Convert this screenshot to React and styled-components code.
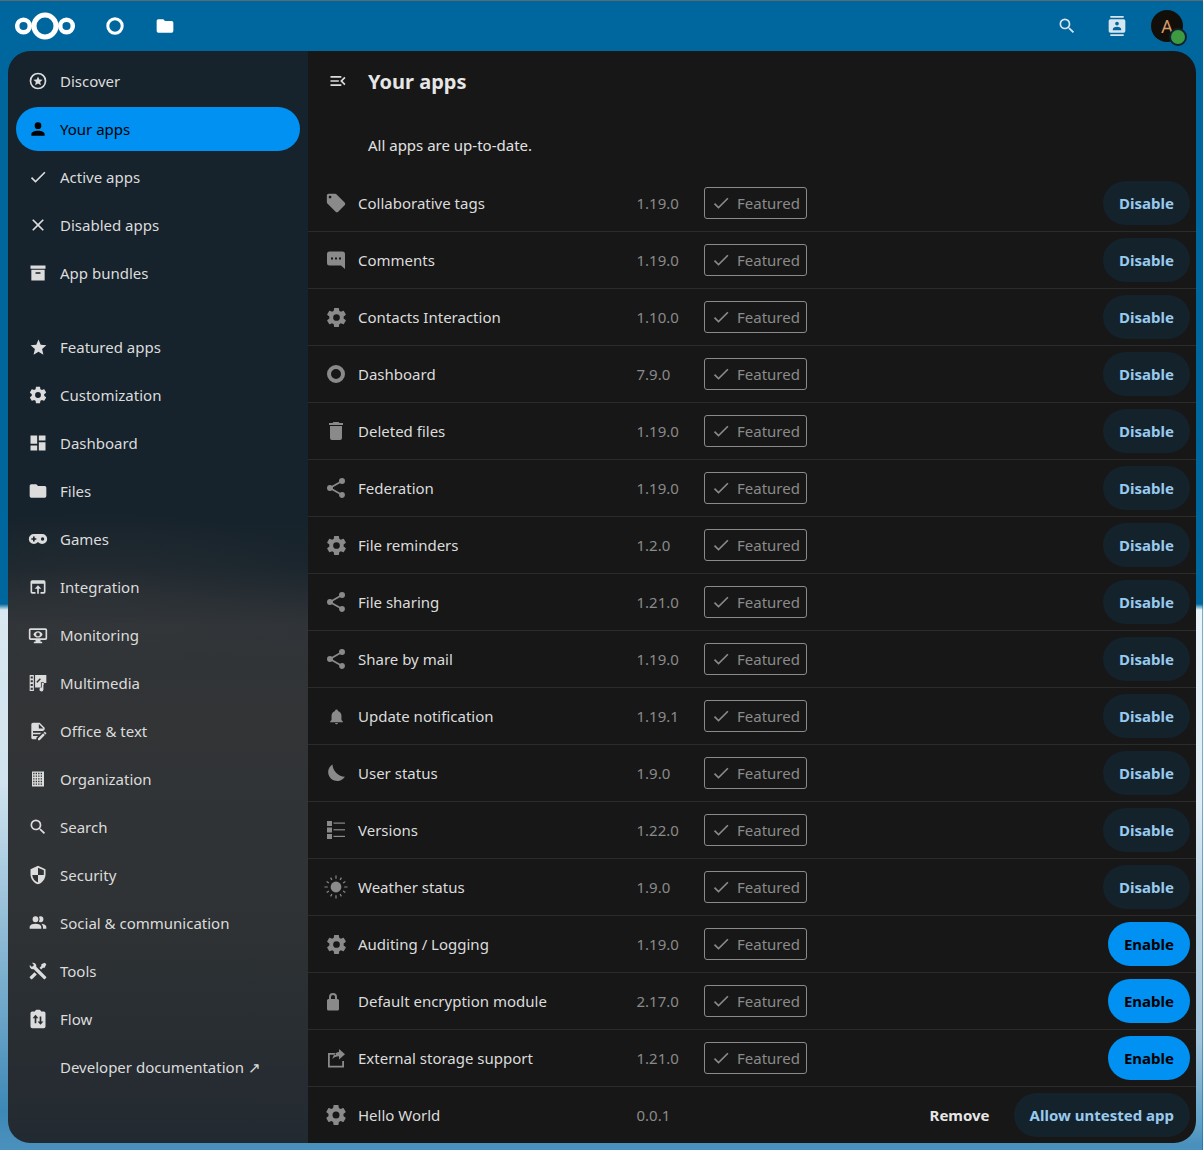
import React from "react";
import styled, { createGlobalStyle } from "styled-components";

const GlobalStyle = createGlobalStyle`
  html, body {
    margin: 0;
    padding: 0;
    background: #00679e;
    font-family: "Noto Sans", sans-serif;
    font-size: 15px;
  }
`;

const p = (d) => <path fillRule="evenodd" d={d} />;

const windows = [];
for (let row = 0; row < 5; row++) {
  for (let col = 0; col < 4; col++) {
    windows.push(`M${6.2 + col * 3} ${4.6 + row * 3.2}h1.6v1.6h-1.6z`);
  }
}

const rays = [0, 30, 60, 90, 120, 150, 180, 210, 240, 270, 300, 330].map((deg) => {
  const r = (deg * Math.PI) / 180;
  const len = deg % 90 === 0 ? 11.5 : 10.8;
  return `M${12 + Math.cos(r) * 8.2} ${12 + Math.sin(r) * 8.2}L${12 + Math.cos(r) * len} ${12 + Math.sin(r) * len}`;
});

const gear =
  "M12,15.5A3.5,3.5 0 0,1 8.5,12A3.5,3.5 0 0,1 12,8.5A3.5,3.5 0 0,1 15.5,12A3.5,3.5 0 0,1 12,15.5M19.43,12.97C19.47,12.65 19.5,12.33 19.5,12C19.5,11.67 19.47,11.34 19.43,11L21.54,9.37C21.73,9.22 21.78,8.95 21.66,8.73L19.66,5.27C19.54,5.05 19.27,4.96 19.05,5.05L16.56,6.05C16.04,5.66 15.5,5.32 14.87,5.07L14.5,2.42C14.46,2.18 14.25,2 14,2H10C9.75,2 9.54,2.18 9.5,2.42L9.13,5.07C8.5,5.32 7.96,5.66 7.44,6.05L4.95,5.05C4.73,4.96 4.46,5.05 4.34,5.27L2.34,8.73C2.21,8.95 2.27,9.22 2.46,9.37L4.57,11C4.53,11.34 4.5,11.67 4.5,12C4.5,12.33 4.53,12.65 4.57,12.97L2.46,14.63C2.27,14.78 2.21,15.05 2.34,15.27L4.34,18.73C4.46,18.95 4.73,19.03 4.95,18.95L7.44,17.94C7.96,18.34 8.5,18.68 9.13,18.93L9.5,21.58C9.54,21.82 9.75,22 10,22H14C14.25,22 14.46,21.82 14.5,21.58L14.87,18.93C15.5,18.67 16.04,18.34 16.56,17.94L19.05,18.95C19.27,19.03 19.54,18.95 19.66,18.73L21.66,15.27C21.78,15.05 21.73,14.78 21.54,14.63L19.43,12.97Z";

const share =
  "M18,16.08C17.24,16.08 16.56,16.38 16.04,16.85L8.91,12.7C8.96,12.47 9,12.24 9,12C9,11.76 8.96,11.53 8.91,11.3L15.96,7.19C16.5,7.69 17.21,8 18,8A3,3 0 0,0 21,5A3,3 0 0,0 18,2A3,3 0 0,0 15,5C15,5.24 15.04,5.47 15.09,5.7L8.04,9.81C7.5,9.31 6.79,9 6,9A3,3 0 0,0 3,12A3,3 0 0,0 6,15C6.79,15 7.5,14.69 8.04,14.19L15.16,18.34C15.11,18.55 15.08,18.77 15.08,19C15.08,20.61 16.39,21.91 18,21.91C19.61,21.91 20.92,20.61 20.92,19A2.92,2.92 0 0,0 18,16.08Z";

const icons = {
  discover: p("M12,2A10,10 0 0,0 2,12A10,10 0 0,0 12,22A10,10 0 0,0 22,12A10,10 0 0,0 12,2M12,4A8,8 0 0,1 20,12A8,8 0 0,1 12,20A8,8 0 0,1 4,12A8,8 0 0,1 12,4M12,6.5L10.4,10.2L6.4,10.55L9.4,13.2L8.5,17.1L12,15L15.5,17.1L14.6,13.2L17.6,10.55L13.6,10.2Z"),
  account: p("M12,4A4,4 0 0,1 16,8A4,4 0 0,1 12,12A4,4 0 0,1 8,8A4,4 0 0,1 12,4M12,14C16.42,14 20,15.79 20,18V20H4V18C4,15.79 7.58,14 12,14Z"),
  check: p("M21,7L9,19L3.5,13.5L4.91,12.09L9,16.17L19.59,5.59L21,7Z"),
  close: p("M19,6.41L17.59,5L12,10.59L6.41,5L5,6.41L10.59,12L5,17.59L6.41,19L12,13.41L17.59,19L19,17.59L13.41,12L19,6.41Z"),
  archive: p("M3,3H21V7H3V3M4,8H20V21H4V8M9.5,11A0.5,0.5 0 0,0 9,11.5V13H15V11.5A0.5,0.5 0 0,0 14.5,11H9.5Z"),
  star: p("M12,17.27L18.18,21L16.54,13.97L22,9.24L14.81,8.62L12,2L9.19,8.62L2,9.24L7.45,13.97L5.82,21L12,17.27Z"),
  gear: p(gear),
  dashboard: p("M13,3V9H21V3M13,21H21V11H13M3,21H11V15H3M3,13H11V3H3V13Z"),
  folder: p("M10,4H4C2.89,4 2,4.89 2,6V18A2,2 0 0,0 4,20H20A2,2 0 0,0 22,18V8C22,6.89 21.1,6 20,6H12L10,4Z"),
  games: p("M7,6H17A6,6 0 0,1 23,12A6,6 0 0,1 17,18C15.22,18 13.63,17.23 12.53,16H11.47C10.37,17.23 8.78,18 7,18A6,6 0 0,1 1,12A6,6 0 0,1 7,6M6,9V11H4V13H6V15H8V13H10V11H8V9H6M17.5,10A2,2 0 0,0 15.5,12A2,2 0 0,0 17.5,14A2,2 0 0,0 19.5,12A2,2 0 0,0 17.5,10Z"),
  integration: p("M12,10L8,14H11V20H13V14H16M19,4H5C3.89,4 3,4.9 3,6V18A2,2 0 0,0 5,20H9V18H5V8H19V18H15V20H19A2,2 0 0,0 21,18V6A2,2 0 0,0 19,4Z"),
  monitor: p("M3,4C1.89,4 1,4.89 1,6V16A2,2 0 0,0 3,18H9V20H7V22H17V20H15V18H21A2,2 0 0,0 23,16V6C23,4.89 22.11,4 21,4H3M3,6H21V16H3V6M12,7.5C9.5,7.5 7.36,9.06 6.5,11.25C7.36,13.44 9.5,15 12,15C14.5,15 16.64,13.44 17.5,11.25C16.64,9.06 14.5,7.5 12,7.5M12,9A2.25,2.25 0 0,1 14.25,11.25A2.25,2.25 0 0,1 12,13.5A2.25,2.25 0 0,1 9.75,11.25A2.25,2.25 0 0,1 12,9Z"),
  multimedia: p("M2 2.5h5v19H2zM3.2 4.3v2.4h2.6V4.3zM3.2 8.8v2.4h2.6V8.8zM3.2 13.2v2.4h2.6v-2.4zM3.2 17.6V20h2.6v-2.4zM8.5 2.5H22V14h-3v-3H15.5v6.5H8.5zM11 12l4.5-4.5-1.2-1.2-4.3 4.3zM16.5 12H22v2.2h-3.5v5.6a2.4 2.4 0 1 1-2-2.3z"),
  office: p("M6,2C4.89,2 4,2.89 4,4V20A2,2 0 0,0 6,22H10V20.09L12.09,18H6V16H14.09L16.09,14H6V12H18.09L20,10.09V8L14,2H6M13,3.5L18.5,9H13V3.5M20.15,13C20,13 19.86,13.05 19.75,13.16L18.73,14.18L20.82,16.26L21.84,15.25C22.05,15.03 22.05,14.67 21.84,14.46L20.54,13.16C20.43,13.05 20.29,13 20.15,13M18.14,14.77L12,20.92V23H14.08L20.23,16.85L18.14,14.77Z"),
  organization: p(`M4.8 3h14.4v18H4.8z${windows.join("")}`),
  search: p("M9.5,3A6.5,6.5 0 0,1 16,9.5C16,11.11 15.41,12.59 14.44,13.73L14.71,14H15.5L20.5,19L19,20.5L14,15.5V14.71L13.73,14.44C12.59,15.41 11.11,16 9.5,16A6.5,6.5 0 0,1 3,9.5A6.5,6.5 0 0,1 9.5,3M9.5,5C7,5 5,7 5,9.5C5,12 7,14 9.5,14C12,14 14,12 14,9.5C14,7 12,5 9.5,5Z"),
  security: p("M12,1L3,5V11C3,16.55 6.84,21.73 12,23C17.16,21.73 21,16.55 21,11V5L12,1M12,12V3.19L19,6.3V11C19,11.34 18.97,11.67 18.93,12H12M12,12V20.92C8.3,19.78 5.55,16.11 5.07,12H12Z"),
  people: p("M16 17V19H2V17S2 13 9 13 16 17 16 17M12.5 7.5A3.5 3.5 0 1 0 9 11A3.5 3.5 0 0 0 12.5 7.5M15.94 13A5.32 5.32 0 0 1 18 17V19H22V17S22 13.37 15.94 13M15 4A3.39 3.39 0 0 0 13.07 4.59A5 5 0 0 1 13.07 10.41A3.39 3.39 0 0 0 15 11A3.5 3.5 0 0 0 15 4Z"),
  tools: p("M21.71 20.29L20.29 21.71A1 1 0 0 1 18.88 21.71L7 9.85A3.81 3.81 0 0 1 6 10A4 4 0 0 1 2.22 4.7L4.76 7.24L5.29 6.71L6.71 5.29L7.24 4.76L4.7 2.22A4 4 0 0 1 10 6A3.81 3.81 0 0 1 9.85 7L21.71 18.88A1 1 0 0 1 21.71 20.29M2.29 18.88A1 1 0 0 0 2.29 20.29L3.71 21.71A1 1 0 0 0 5.12 21.71L10.59 16.25L7.76 13.42M20 2L16 4V6L13.83 8.17L15.83 10.17L18 8H20L22 4Z"),
  flow: p("M19,3H15.82C15.4,1.84 14.3,1 13,1H11C9.7,1 8.6,1.84 8.18,3H5A2,2 0 0,0 3,5V21A2,2 0 0,0 5,23H19A2,2 0 0,0 21,21V5A2,2 0 0,0 19,3M9,7L5.5,11H8V17H10V11H12.5ZM15,19L18.5,15H16V9H14V15H11.5Z"),
  tag: p("M5.5,7A1.5,1.5 0 0,1 4,5.5A1.5,1.5 0 0,1 5.5,4A1.5,1.5 0 0,1 7,5.5A1.5,1.5 0 0,1 5.5,7M21.41,11.58L12.41,2.58C12.05,2.22 11.55,2 11,2H4C2.89,2 2,2.89 2,4V11C2,11.55 2.22,12.05 2.59,12.41L11.58,21.41C11.95,21.77 12.45,22 13,22C13.55,22 14.05,21.77 14.41,21.41L21.41,14.41C21.78,14.05 22,13.55 22,13C22,12.44 21.77,11.94 21.41,11.58Z"),
  comment: p("M5.5 3.5h13A2.5 2.5 0 0 1 21 6V21l-4-3.5H5.5A2.5 2.5 0 0 1 3 15V6A2.5 2.5 0 0 1 5.5 3.5zM7 9.5v2h2v-2zM11 9.5v2h2v-2zM15 9.5v2h2v-2z"),
  ring: <circle cx="12" cy="12" r="7" fill="none" stroke="currentColor" strokeWidth="4" />,
  topRing: <circle cx="12" cy="12" r="7.2" fill="none" stroke="currentColor" strokeWidth="3" />,
  trash: p("M19,4H15.5L14.5,3H9.5L8.5,4H5V6H19M6,19A2,2 0 0,0 8,21H16A2,2 0 0,0 18,19V7H6V19Z"),
  share: p(share),
  bell: p("M21,19V20H3V19L5,17V11C5,7.9 7.03,5.17 10,4.29C10,4.19 10,4.1 10,4A2,2 0 0,1 12,2A2,2 0 0,1 14,4C14,4.1 14,4.19 14,4.29C16.97,5.17 19,7.9 19,11V17L21,19M14,21A2,2 0 0,1 12,23A2,2 0 0,1 10,21"),
  moon: p("M8.5 3.4A9 9 0 1 0 20.9 15.7A13 13 0 0 1 8.5 3.4Z"),
  list: (
    <>
      <rect x="3" y="3" width="5" height="5" />
      <rect x="3" y="9.5" width="5" height="5" />
      <rect x="3" y="16" width="5" height="5" />
      <rect x="9.5" y="4.5" width="11.5" height="1.2" />
      <rect x="9.5" y="11.2" width="11.5" height="1.2" />
      <rect x="9.5" y="17.8" width="11.5" height="1.2" />
    </>
  ),
  sun: (
    <>
      <circle cx="12" cy="12" r="5.4" />
      <path d={rays.join("")} stroke="currentColor" strokeWidth="1.2" fill="none" />
    </>
  ),
  lock: p("M3 20V11.5A1.5 1.5 0 0 1 4.5 10H5V8a4 4 0 0 1 8 0v2h.5A1.5 1.5 0 0 1 15 11.5V20A1.5 1.5 0 0 1 13.5 21.5H4.5A1.5 1.5 0 0 1 3 20zM7 10h4V8a2 2 0 0 0-4 0z"),
  external: p("M4 7h8v1.8H5.8v11h12.4V15H20v6.6H4zM15 3l6 5.2-6 5.2v-3.2c-3 0-5 .8-6.5 3 .5-4.2 2.8-6.8 6.5-7.3z"),
  menuOpen: p("M21,15.61L19.59,17L14.58,12L19.59,7L21,8.39L17.44,12L21,15.61M3,6H16V8H3V6M3,13V11H13V13H3M3,18V16H16V18H3Z"),
  contacts: p("M20,0H4V2H20V0M4,24H20V22H4V24M20,4H4A2,2 0 0,0 2,6V18A2,2 0 0,0 4,20H20A2,2 0 0,0 22,18V6A2,2 0 0,0 20,4M12,6.75A2.25,2.25 0 0,1 14.25,9A2.25,2.25 0 0,1 12,11.25A2.25,2.25 0 0,1 9.75,9A2.25,2.25 0 0,1 12,6.75M17,17H7V15.5C7,13.83 10.33,13 12,13C13.67,13 17,13.83 17,15.5V17Z"),
};

const Glyph = styled.svg`
  width: ${(props) => props.$size || 20}px;
  height: ${(props) => props.$size || 20}px;
  fill: currentColor;
  flex: none;
  display: block;
`;

function Icon({ name, size }) {
  return (
    <Glyph $size={size} viewBox="0 0 24 24" aria-hidden="true">
      {icons[name]}
    </Glyph>
  );
}

const Page = styled.div`
  box-sizing: border-box;
  width: 100%;
  height: 1150px;
  overflow: hidden;
  border-top: 1px solid #5d6a72;
  display: flex;
  flex-direction: column;
  background:
    linear-gradient(#00679e 0, #00679e 603px, #d9e8f1 609px, #d2e4ef 780px, #9cc3db 900px, #6ea6c9 1010px, #3d88b6 1110px, #4a90bd 1143px) left / 51% 100% no-repeat,
    linear-gradient(#00679e 0, #00679e 603px, #e9f3f8 609px, #dfecf4 800px, #bcd6e7 900px, #a0c4dc 1040px, #5c9fc6 1125px, #4a90bd 1143px) right / 51% 100% no-repeat;
`;

const TopBar = styled.header`
  height: 50px;
  flex: none;
  display: flex;
  align-items: center;
  padding: 0 20px 0 15px;
  color: #fff;
`;

const Logo = styled.svg`
  width: 61px;
  height: 30px;
  flex: none;
  display: block;
`;

const TopNav = styled.nav`
  display: flex;
  align-items: center;
  margin-left: 14px;
`;

const TopNavItem = styled.div`
  width: 50px;
  height: 50px;
  display: flex;
  align-items: center;
  justify-content: center;
`;

const TopActions = styled.div`
  margin-left: auto;
  display: flex;
  align-items: center;
  color: #d6e6f0;
`;

const Avatar = styled.div`
  position: relative;
  width: 32px;
  height: 32px;
  margin-left: 9px;
  border-radius: 50%;
  background: #120e0a;
  color: #d49b66;
  font-size: 18px;
  line-height: 32px;
  text-align: center;
`;

const StatusDot = styled.span`
  position: absolute;
  right: -4px;
  bottom: -4px;
  box-sizing: border-box;
  width: 18px;
  height: 18px;
  border-radius: 50%;
  background: #3d9a41;
  border: 2px solid #10222e;
`;

const Body = styled.div`
  flex: 1;
  min-height: 0;
  margin: 0 7px 7px 8px;
  border-radius: 22px;
  overflow: hidden;
  display: flex;
`;

const Sidebar = styled.aside`
  width: 300px;
  flex: none;
  box-sizing: border-box;
  padding: 8px 8px 0;
  background:
    radial-gradient(240px 80px at 90px 540px, rgba(60, 60, 60, 0.3), rgba(60, 60, 60, 0) 100%),
    linear-gradient(#17232c 0, #17232c 470px, #1a252d 515px, #303438 575px, #323436 660px, #2f3335 850px, #282d32 1000px, #222a31 1092px);
`;

const NavList = styled.ul`
  list-style: none;
  margin: 0;
  padding: 0;
`;

const NavItem = styled.li`
  height: 44px;
  margin-bottom: ${(props) => (props.$gapAfter ? 30 : 4)}px;
  display: flex;
  align-items: center;
  border-radius: 22px;
  background: ${(props) => (props.$active ? "#0091f2" : "transparent")};
  color: ${(props) => (props.$active ? "#000" : "#dcdcdc")};
`;

const NavIconBox = styled.span`
  width: 44px;
  height: 44px;
  flex: none;
  display: flex;
  align-items: center;
  justify-content: center;
`;

const Main = styled.main`
  flex: 1;
  min-width: 0;
  background: #171717;
  color: #dcdcdc;
`;

const MainHeader = styled.div`
  height: 62px;
  box-sizing: border-box;
  padding: 0 0 2px 20px;
  display: flex;
  align-items: center;
`;

const Title = styled.h2`
  margin: 0 0 0 20px;
  font-size: 20px;
  font-weight: 700;
  color: #e6e6e6;
`;

const UpToDate = styled.p`
  height: 62px;
  margin: 0;
  padding: 2px 0 0 60px;
  box-sizing: border-box;
  display: flex;
  align-items: center;
  color: #e2e2e2;
`;

const AppRow = styled.div`
  height: ${(props) => (props.$last ? 56 : 57)}px;
  box-sizing: border-box;
  padding: 0 6px 0 16px;
  display: flex;
  align-items: center;
  border-bottom: ${(props) => (props.$last ? "none" : "1px solid #2b2b2b")};
`;

const AppIconBox = styled.span`
  width: 24px;
  height: 24px;
  flex: none;
  display: flex;
  align-items: center;
  justify-content: center;
  color: #8a8a8a;
`;

const AppName = styled.span`
  width: 278.5px;
  flex: none;
  margin-left: 10px;
`;

const Version = styled.span`
  width: 67.5px;
  flex: none;
  color: #8a8a8a;
`;

const Badge = styled.span`
  box-sizing: border-box;
  height: 32px;
  display: flex;
  align-items: center;
  gap: 6px;
  padding: 0 6px;
  border: 1px solid #8a8a8a;
  border-radius: 3px;
  color: #8a8a8a;
`;

const Actions = styled.div`
  margin-left: auto;
  display: flex;
  align-items: center;
  gap: 8px;
`;

const Button = styled.button`
  height: 44px;
  padding: 0 16px;
  border: none;
  border-radius: 22px;
  font-family: inherit;
  font-size: 15px;
  font-weight: 700;
  background: ${(props) =>
    props.$kind === "primary" ? "#0091f2" : props.$kind === "plain" ? "transparent" : "#14222c"};
  color: ${(props) =>
    props.$kind === "primary" ? "#000" : props.$kind === "plain" ? "#e6e6e6" : "#98caee"};
`;

const navItems = [
  { icon: "discover", label: "Discover" },
  { icon: "account", label: "Your apps", active: true },
  { icon: "check", label: "Active apps" },
  { icon: "close", label: "Disabled apps" },
  { icon: "archive", label: "App bundles", gapAfter: true },
  { icon: "star", label: "Featured apps", size: 19 },
  { icon: "gear", label: "Customization" },
  { icon: "dashboard", label: "Dashboard" },
  { icon: "folder", label: "Files" },
  { icon: "games", label: "Games" },
  { icon: "integration", label: "Integration" },
  { icon: "monitor", label: "Monitoring" },
  { icon: "multimedia", label: "Multimedia" },
  { icon: "office", label: "Office & text" },
  { icon: "organization", label: "Organization" },
  { icon: "search", label: "Search" },
  { icon: "security", label: "Security" },
  { icon: "people", label: "Social & communication" },
  { icon: "tools", label: "Tools" },
  { icon: "flow", label: "Flow" },
  { label: "Developer documentation ↗" },
];

const apps = [
  { icon: "tag", size: 22, name: "Collaborative tags", version: "1.19.0" },
  { icon: "comment", size: 24, name: "Comments", version: "1.19.0" },
  { icon: "gear", size: 23, name: "Contacts Interaction", version: "1.10.0" },
  { icon: "ring", size: 24, name: "Dashboard", version: "7.9.0" },
  { icon: "trash", size: 24, name: "Deleted files", version: "1.19.0" },
  { icon: "share", size: 24, name: "Federation", version: "1.19.0" },
  { icon: "gear", size: 23, name: "File reminders", version: "1.2.0" },
  { icon: "share", size: 24, name: "File sharing", version: "1.21.0" },
  { icon: "share", size: 24, name: "Share by mail", version: "1.19.0" },
  { icon: "bell", size: 17, name: "Update notification", version: "1.19.1" },
  { icon: "moon", size: 24, name: "User status", version: "1.9.0" },
  { icon: "list", size: 24, name: "Versions", version: "1.22.0" },
  { icon: "sun", size: 24, name: "Weather status", version: "1.9.0" },
  { icon: "gear", size: 23, name: "Auditing / Logging", version: "1.19.0", enable: true },
  { icon: "lock", size: 24, name: "Default encryption module", version: "2.17.0", enable: true },
  { icon: "external", size: 24, name: "External storage support", version: "1.21.0", enable: true },
  { icon: "gear", size: 24, name: "Hello World", version: "0.0.1", untested: true },
];

function AppLine({ app, last }) {
  return (
    <AppRow $last={last}>
      <AppIconBox>
        <Icon name={app.icon} size={app.size} />
      </AppIconBox>
      <AppName>{app.name}</AppName>
      <Version>{app.version}</Version>
      {!app.untested && (
        <Badge>
          <Icon name="check" size={20} />
          Featured
        </Badge>
      )}
      <Actions>
        {app.untested ? (
          <>
            <Button $kind="plain">Remove</Button>
            <Button>Allow untested app</Button>
          </>
        ) : app.enable ? (
          <Button $kind="primary">Enable</Button>
        ) : (
          <Button>Disable</Button>
        )}
      </Actions>
    </AppRow>
  );
}

export default function App() {
  return (
    <Page>
      <GlobalStyle />
      <TopBar>
        <Logo viewBox="0 0 61 30" aria-label="Nextcloud">
          <g fill="none" stroke="#fff">
            <circle cx="30" cy="15" r="11" strokeWidth="5" />
            <circle cx="8.5" cy="15" r="6.3" strokeWidth="4.5" />
            <circle cx="51.5" cy="15" r="6.3" strokeWidth="4.5" />
          </g>
        </Logo>
        <TopNav>
          <TopNavItem>
            <Icon name="topRing" size={24} />
          </TopNavItem>
          <TopNavItem>
            <Icon name="folder" size={20} />
          </TopNavItem>
        </TopNav>
        <TopActions>
          <TopNavItem>
            <Icon name="search" size={20} />
          </TopNavItem>
          <TopNavItem>
            <Icon name="contacts" size={20} />
          </TopNavItem>
          <Avatar>
            A
            <StatusDot />
          </Avatar>
        </TopActions>
      </TopBar>
      <Body>
        <Sidebar>
          <NavList>
            {navItems.map((item) => (
              <NavItem key={item.label} $active={item.active} $gapAfter={item.gapAfter}>
                <NavIconBox>{item.icon && <Icon name={item.icon} size={item.size} />}</NavIconBox>
                {item.label}
              </NavItem>
            ))}
          </NavList>
        </Sidebar>
        <Main>
          <MainHeader>
            <Icon name="menuOpen" size={20} />
            <Title>Your apps</Title>
          </MainHeader>
          <UpToDate>All apps are up-to-date.</UpToDate>
          {apps.map((app, i) => (
            <AppLine key={app.name} app={app} last={i === apps.length - 1} />
          ))}
        </Main>
      </Body>
    </Page>
  );
}
